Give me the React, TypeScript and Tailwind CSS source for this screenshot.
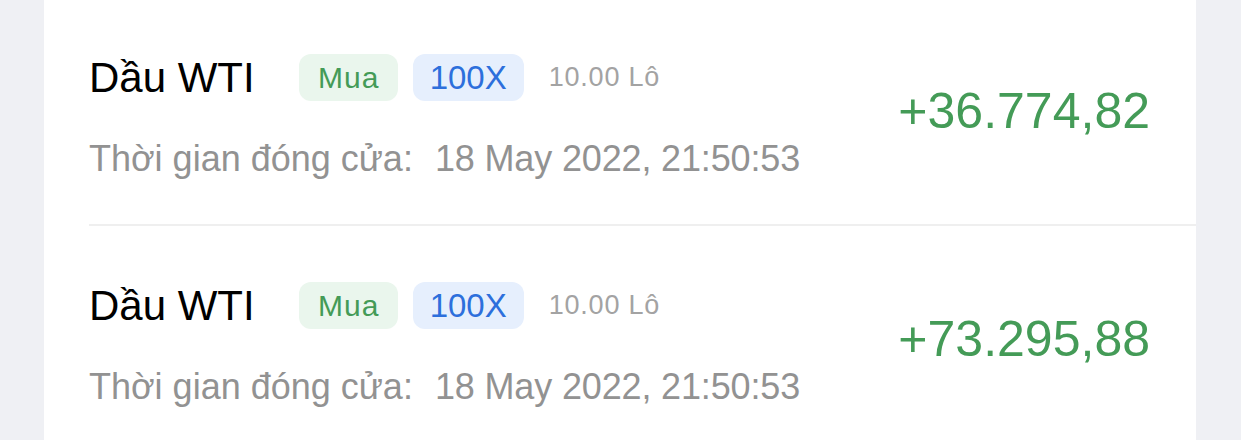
import React from "react";

type Trade = { name: string; side: string; leverage: string; lots: string; closed: string; pnl: string };

const trades: Trade[] = [
  { name: "Dầu WTI", side: "Mua", leverage: "100X", lots: "10.00 Lô", closed: "18 May 2022, 21:50:53", pnl: "+36.774,82" },
  { name: "Dầu WTI", side: "Mua", leverage: "100X", lots: "10.00 Lô", closed: "18 May 2022, 21:50:53", pnl: "+73.295,88" },
];

function Row({ t, first }: { t: Trade; first: boolean }) {
  return (
    <div
      className={
        "ml-[45px] flex items-start justify-between border-b-2 border-[#efefef] pr-[46px] pb-[43px] " +
        (first ? "pt-[54px]" : "pt-[56px]")
      }
    >
      <div className="flex flex-col">
        <div className="flex h-[47px] items-center">
          <span className="text-[42px] leading-none text-black">{t.name}</span>
          <span className="ml-[44px] flex h-[47px] w-[99px] items-center justify-center rounded-[12px] bg-[#eaf6ed] pl-[1px] text-[30px] leading-none tracking-[1px] text-[#449b57]">
            {t.side}
          </span>
          <span className="ml-[15px] flex h-[47px] w-[111px] items-center justify-center rounded-[12px] bg-[#e6effd] text-[33px] leading-none text-[#2d6fdc]">
            {t.leverage}
          </span>
          <span className="ml-[25px] text-[27px] leading-none tracking-[0.8px] text-[#a3a3a3]">{t.lots}</span>
        </div>
        <div className="mt-[36px] flex h-[44px] items-center text-[#929292]">
          <span className="text-[36px] leading-none">Thời gian đóng cửa:</span>
          <span className="ml-[22px] text-[36px] leading-none tracking-[-0.15px]">{t.closed}</span>
        </div>
      </div>
      <div className="mt-[28px] text-[50px] leading-[58px] text-[#449b57]">{t.pnl}</div>
    </div>
  );
}

export default function App() {
  return (
    <div
      className="h-[440px] w-[1241px] overflow-hidden bg-[#eff0f4] pl-[44px] pr-[45px]"
      style={{ fontFamily: '"Liberation Sans", Arial, sans-serif' }}
    >
      <div className="h-full bg-white">
        {trades.map((t, i) => (
          <Row key={i} t={t} first={i === 0} />
        ))}
      </div>
    </div>
  );
}
